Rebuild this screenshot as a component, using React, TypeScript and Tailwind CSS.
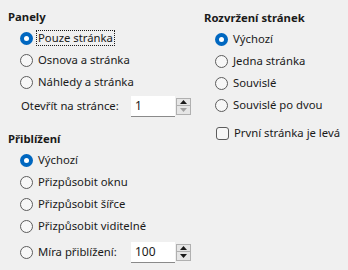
import React from "react";

const font = { fontFamily: '"Noto Sans", "Open Sans", sans-serif' };

function Radio({ checked, label, focus }: { checked?: boolean; label: string; focus?: boolean }) {
  return (
    <div className="flex h-[22px] items-center">
      {checked ? (
        <span className="flex h-[13px] w-[13px] shrink-0 items-center justify-center rounded-full bg-[#0067c0]">
          <span className="h-[5px] w-[5px] rounded-full bg-white" />
        </span>
      ) : (
        <span className="h-[13px] w-[13px] shrink-0 rounded-full border border-[#5c5c5c] bg-[#f7f7f7]" />
      )}
      <span
        className={
          "ml-[4px] px-px leading-[14px] " + (focus ? "outline-1 outline-dotted outline-[#1a1a1a]" : "")
        }
      >
        {label}
      </span>
    </div>
  );
}

function Spin({ value, downDisabled }: { value: string; downDisabled?: boolean }) {
  return (
    <div className="flex h-[21px] items-stretch text-[12px]">
      <div className="flex w-[44px] items-center border-b border-[#8a8a8a] bg-white pl-[4px] text-[#1a1a1a]">
        {value}
      </div>
      <div className="ml-[1px] flex w-[15px] flex-col justify-center py-[2px]">
        <div className="flex h-[9px] items-center justify-center border border-[#b0b0b0] bg-[#e6e6e6]">
          <svg width="7" height="4" viewBox="0 0 7 4">
            <path d="M0 4 L3.5 0 L7 4 Z" fill="#1a1a1a" />
          </svg>
        </div>
        <div className="flex h-[9px] items-center justify-center border border-t-0 border-[#b0b0b0] bg-[#e6e6e6]">
          <svg width="7" height="4" viewBox="0 0 7 4">
            <path d="M0 0 L3.5 4 L7 0 Z" fill={downDisabled ? "#a0a0a0" : "#1a1a1a"} />
          </svg>
        </div>
      </div>
    </div>
  );
}

export default function App() {
  return (
    <div
      className="flex h-[270px] w-[348px] bg-[#f0f0f0] text-[11.3px] text-[#1a1a1a]"
      style={font}
    >
      <div className="flex w-[196px] flex-col pl-[8px] pt-[9px]">
        <div className="h-[16px] font-bold leading-[16px]">Panely</div>
        <div className="mt-[2px] flex flex-col pl-[12px]">
          <Radio checked focus label="Pouze stránka" />
          <Radio label="Osnova a stránka" />
          <Radio label="Náhledy a stránka" />
        </div>
        <div className="mt-[2px] flex h-[22px] items-center pl-[13px]">
          <span className="w-[110px]">Otevřít na stránce:</span>
          <Spin value="1" downDisabled />
        </div>
        <div className="mt-[14px] h-[16px] font-bold leading-[16px]">Přiblížení</div>
        <div className="mt-[2px] flex flex-col pl-[12px]">
          <Radio checked label="Výchozí" />
          <Radio label="Přizpůsobit oknu" />
          <Radio label="Přizpůsobit šířce" />
          <Radio label="Přizpůsobit viditelné" />
        </div>
        <div className="mt-[4px] flex h-[22px] items-center pl-[12px]">
          <div className="w-[111px]">
            <Radio label="Míra přiblížení:" />
          </div>
          <Spin value="100" />
        </div>
      </div>
      <div className="flex flex-1 flex-col pl-[8px] pt-[10px]">
        <div className="h-[16px] font-bold leading-[16px]">Rozvržení stránek</div>
        <div className="mt-[2px] flex flex-col pl-[11px]">
          <Radio checked label="Výchozí" />
          <Radio label="Jedna stránka" />
          <Radio label="Souvislé" />
          <Radio label="Souvislé po dvou" />
        </div>
        <div className="mt-[6px] flex h-[22px] items-center pl-[12px]">
          <span className="h-[13px] w-[13px] shrink-0 rounded-[3px] border border-[#5c5c5c] bg-[#f7f7f7]" />
          <span className="ml-[5px]">První stránka je levá</span>
        </div>
      </div>
    </div>
  );
}
